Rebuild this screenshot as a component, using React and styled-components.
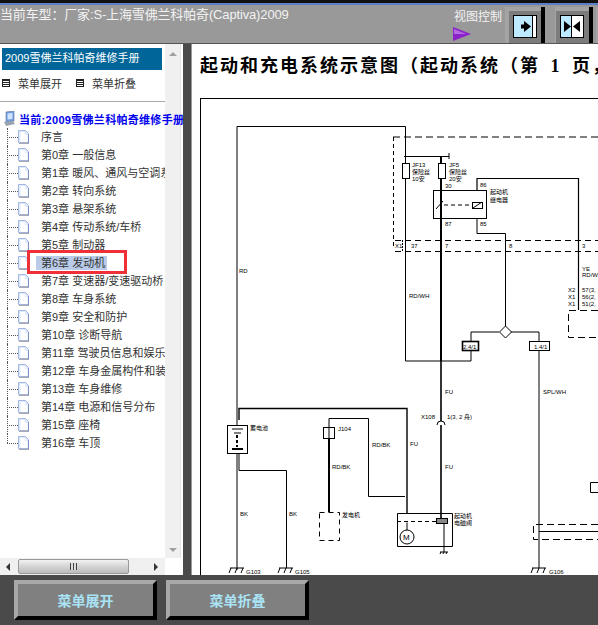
import React from 'react';
import styled, { createGlobalStyle } from 'styled-components';

const CJK = '"Liberation Sans", "Noto Sans CJK SC", sans-serif';

const Global = createGlobalStyle`
    html, body {
        margin: 0;
        padding: 0;
        background: #4a4a4a;
    }
    body {
        font-family: ${CJK};
        overflow: hidden;
    }
`;

const Page = styled.div`
    width: 598px;
    height: 625px;
    display: flex;
    flex-direction: column;
    overflow: hidden;
`;

const TopStrip = styled.div`
    height: 3px;
    background: #111;
    border-bottom: 2px solid #5b7fc4;
`;

const Header = styled.div`
    height: 38px;
    background: #999;
    border-bottom: 1px solid #555;
    display: flex;
    justify-content: space-between;
    overflow: hidden;
`;

const CarTitle = styled.div`
    font-size: 13px;
    line-height: 18px;
    letter-spacing: -0.15px;
    color: #f2f2f2;
    white-space: nowrap;
    margin-top: 1px;
`;

const Tools = styled.div`
    display: flex;
    width: 144px;
    flex: none;
    align-items: flex-start;
`;

const ViewControl = styled.div`
    width: 51px;
    flex: none;
    color: #f2f2f2;
    font-size: 12px;
    line-height: 16px;
    padding-top: 4px;
    white-space: nowrap;
    svg {
        display: block;
        margin: 2px 0 0 -1px;
    }
`;

const ToolButton = styled.div`
    width: ${p => p.$w}px;
    height: 37px;
    flex: none;
    margin-top: 2px;
    margin-right: ${p => p.$gap}px;
    box-sizing: border-box;
    background: #a4a4a4;
    border-right: 4px solid #000;
    padding: 4px 0 0 ${p => p.$pad}px;
`;

const ToolFace = styled.div`
    height: 100%;
    box-sizing: border-box;
    background: #7c7c7c;
    padding: 4px;
    svg {
        display: block;
    }
`;

const Main = styled.div`
    flex: 1;
    display: flex;
    min-height: 0;
`;

const LeftPanel = styled.div`
    width: 183px;
    flex: none;
    background: #fff;
    display: flex;
    flex-direction: column;
    overflow: hidden;
`;

const LeftBody = styled.div`
    flex: 1;
    display: flex;
    min-height: 0;
`;

const TreeColumn = styled.div`
    width: 165px;
    flex: none;
    padding-top: 4px;
`;

const BookTitle = styled.div`
    margin-left: 2px;
    width: 160px;
    height: 22px;
    line-height: 21px;
    background: #006699;
    color: #fff;
    font-size: 11px;
    padding-left: 3px;
    box-sizing: border-box;
`;

const MenuLinks = styled.div`
    display: flex;
    height: 26px;
    padding: 0 0 5px 2px;
    align-items: center;
    border-bottom: 1px solid #aaa;
`;

const MenuLink = styled.div`
    display: flex;
    align-items: center;
    gap: 8px;
    width: 74px;
    font-size: 11px;
    color: #333;
    white-space: nowrap;
`;

const MenuGlyph = styled.span`
    width: 6px;
    height: 6px;
    border: 1px solid #222;
    background: repeating-linear-gradient(#222 0 1px, #fff 1px 2px);
    flex: none;
`;

const Tree = styled.div`
    margin-top: 8px;
`;

const RootRow = styled.div`
    position: relative;
    z-index: 1;
    display: flex;
    align-items: center;
    gap: 3px;
    height: 18px;
    padding-left: 3px;
    width: 200px;
    font-size: 11px;
    font-weight: bold;
    letter-spacing: 0.3px;
    color: #0000ee;
    white-space: nowrap;
`;

const Items = styled.div`
    margin-left: 7px;
`;

const Row = styled.div`
    position: relative;
    display: flex;
    align-items: center;
    height: 18px;
`;

const Elbow = styled.div`
    position: relative;
    width: 11px;
    height: 18px;
    flex: none;
    &::before {
        content: '';
        position: absolute;
        left: 0;
        top: 0;
        height: ${p => (p.$last ? 9 : 18)}px;
        border-left: 1px dotted #555;
    }
    &::after {
        content: '';
        position: absolute;
        left: 0;
        top: 9px;
        width: 11px;
        border-top: 1px dotted #555;
    }
`;

const ItemLabel = styled.span`
    margin-left: 7px;
    padding: 0 2px 0 5px;
    font-size: 11px;
    line-height: 14px;
    color: #333;
    white-space: nowrap;
    background: ${p => (p.$selected ? '#b9cbe8' : 'transparent')};
    overflow: ${p => (p.$selected ? 'visible' : 'hidden')};
    max-width: 122px;
`;

const RedMark = styled.div`
    position: absolute;
    left: 20px;
    top: -4px;
    width: 100px;
    height: 24px;
    box-sizing: border-box;
    border: 3px solid #ef3038;
`;

const VScroll = styled.div`
    width: 16px;
    flex: none;
    background: #f0f0f0;
    border-right: 1px solid #e4e4e4;
    display: flex;
    flex-direction: column;
    justify-content: space-between;
    align-items: center;
    padding: 8px 0 6px;
    box-sizing: border-box;
`;

const UpArrow = styled.span`
    border: 4px solid transparent;
    border-top: 0;
    border-bottom: 4px solid #a0a0a0;
`;

const DownArrow = styled.span`
    border: 4px solid transparent;
    border-bottom: 0;
    border-top: 4px solid #a0a0a0;
`;

const HScroll = styled.div`
    height: 17px;
    background: #f0f0f0;
    display: flex;
    align-items: center;
    width: 165px;
    padding: 0 7px 0 6px;
    box-sizing: border-box;
`;

const SideArrow = styled.span`
    border: 4px solid transparent;
    ${p => (p.$left
        ? 'border-left: 0; border-right: 4px solid #333;'
        : 'border-right: 0; border-left: 4px solid #333; margin-left: auto;')}
`;

const Thumb = styled.div`
    width: 111px;
    height: 15px;
    margin-left: 8px;
    box-sizing: border-box;
    border: 1px solid #999;
    border-radius: 2px;
    background: linear-gradient(#f2f2f2, #d4d4d4 50%, #bdbdbd);
    display: flex;
    align-items: center;
    justify-content: center;
    &::after {
        content: '';
        width: 7px;
        height: 7px;
        background: repeating-linear-gradient(90deg, #444 0 1px, #ddd 1px 3px);
    }
`;

const Divider = styled.div`
    width: 8px;
    flex: none;
    background: #4a4a4a;
    border-right: 1px solid #999;
`;

const Content = styled.div`
    flex: 1;
    background: #fff;
    min-width: 0;
    overflow: hidden;
    display: flex;
    flex-direction: column;
`;

const DocTitle = styled.div`
    height: 54px;
    padding: 9px 0 0 8px;
    box-sizing: border-box;
    font-family: "Liberation Serif", "Noto Sans CJK SC", serif;
    font-size: 18px;
    line-height: 26px;
    letter-spacing: 2px;
    word-spacing: 4px;
    font-weight: bold;
    color: #000;
    white-space: nowrap;
`;

const Sheet = styled.div`
    flex: 1;
    margin-left: 8px;
    border-top: 1px solid #000;
    border-left: 1px solid #000;
    min-height: 0;
    svg {
        display: block;
    }
`;

const Footer = styled.div`
    height: 50px;
    background: #4a4a4a;
    display: flex;
    gap: 9px;
    padding: 5px 0 0 14px;
    box-sizing: border-box;
`;

const FooterButton = styled.div`
    width: 143px;
    height: 40px;
    box-sizing: border-box;
    background: #808080;
    border-style: solid;
    border-width: 4px;
    border-color: #a8a8a8 #000 #000 #a8a8a8;
    color: #a9e3f5;
    font-size: 14px;
    font-weight: bold;
    display: flex;
    align-items: center;
    justify-content: center;
`;

const chapters = [
    '序言', '第0章 一般信息', '第1章 暖风、通风与空调系统', '第2章 转向系统', '第3章 悬架系统',
    '第4章 传动系统/车桥', '第5章 制动器', '第6章 发动机', '第7章 变速器/变速驱动桥', '第8章 车身系统',
    '第9章 安全和防护', '第10章 诊断导航', '第11章 驾驶员信息和娱乐系统', '第12章 车身金属构件和装饰',
    '第13章 车身维修', '第14章 电源和信号分布', '第15章 座椅', '第16章 车顶'
];

const PageIcon = () => (
    <svg width="11" height="14" viewBox="0 0 11 14" style={{ flex: 'none' }}>
        <path d="M.5.5h7l3 3v9h-10z" fill="#dfeafc" stroke="#a4b4e0" />
        <path d="M2.500 2h4.500v3h2.500v7h-7z" fill="#fff" />
        <path d="M1 13.500h10" stroke="#a8a8a8" />
        <path d="M10.500 4v9" stroke="#7f8fc8" />
    </svg>
);

const RootIcon = () => (
    <svg width="13" height="16" viewBox="0 0 13 16" style={{ flex: 'none' }}>
        <path d="M3 1l8-1v10l-8 1z" fill="#6f9fe0" stroke="#5a6f9a" strokeWidth=".6" />
        <path d="M4.500 2.500l5-.5v6l-5 .6z" fill="#cfe4ff" />
        <path d="M1 11l9-1 2 3-9 2z" fill="#9aa3b0" />
    </svg>
);

const Ground = ({ x, y }) => (
    <g stroke="#000" strokeWidth="1" fill="none">
        <path d={`M${x - 7} ${y}H${x + 7}`} />
        <path d={`M${x - 6} ${y}l-2 5M${x} ${y}l-2 5M${x + 6} ${y}l-2 5`} />
    </g>
);

const Tiny = ({ x, y, children, size = 6 }) => (
    <text x={x} y={y} fontSize={size} fill="#000" fontFamily={CJK}>{children}</text>
);

const Diagram = () => (
    <svg width="397" height="476" viewBox="201 99 397 476">
        <g fill="none" stroke="#000" strokeWidth="1">
            {/* main feeds */}
            <path d="M237 570V126.500H405.500V361H471V332H499" />
            <path d="M511 332H539V341M539 351V568" />
            <path d="M477 190V178.500H578.500V310" strokeWidth="1.200" />
            <path d="M477 218V233.500H505.500V326" />
            <path d="M404 156.500H449M449 153V159" />
            <path d="M441 156V361" strokeWidth="2" />
            <path d="M441 361V421M441 425V521" strokeWidth="1.600" />
            <path d="M437 425a4 4 0 0 1 8 0" />
            <path d="M239 454V470.500H286.500V568" />
            <path d="M239 420V408.500H407V513" strokeWidth="1.400" />
            <path d="M329 512V418.500H368.500V496.500H405" />
            <path d="M329 438V512" strokeWidth="2" />
            <path d="M444 523V552" />

            {/* fuses and relay */}
            <rect x="402.500" y="163.500" width="7" height="15" fill="#fff" />
            <rect x="438.500" y="163.500" width="7" height="15" fill="#fff" />
            <rect x="433.500" y="190.500" width="53" height="28" />
            <rect x="472.500" y="202.500" width="10" height="6" />
            <path d="M473 208l9-6M436 209l7-8" />
            <path d="M444 205H472" strokeDasharray="4 3" />

            {/* dashed harness */}
            <path d="M393.500 137V248" strokeDasharray="4 3" />
            <path d="M393 137H598" strokeDasharray="7 4" />
            <path d="M395 240.500H598M395 251.500H598" strokeDasharray="6 4" />
            <path d="M402.500 240V252" strokeDasharray="2 1" />
            <path d="M598 310.500H568.500V337.500H598" strokeDasharray="7 4" />

            {/* splice boxes */}
            <path d="M505.500 326l6 6-6 6-6-6z" fill="#fff" />
            <rect x="462.500" y="341.500" width="16" height="9" fill="#fff" strokeWidth="1.600" />
            <rect x="529.500" y="341.500" width="20" height="9" fill="#fff" />

            {/* battery */}
            <rect x="227.500" y="425.500" width="20" height="28" fill="#fff" />
            <path d="M232 429H243M234 433H241" />
            <path d="M237 435V447" strokeWidth="2" strokeDasharray="3 2" />
            <path d="M232 449H243" strokeWidth="2" />

            {/* J104 and generator */}
            <rect x="323.500" y="427.500" width="11" height="11" />
            <path d="M319.500 512.500H339.500V540.500H319.500z" strokeDasharray="5 4" />

            {/* starter */}
            <path d="M407 513.500H397.500V546.500H452.500V513.500H407" />
            <circle cx="407" cy="537" r="7" fill="#fff" />
            <path d="M397 521.500H436" strokeDasharray="4 3" />
            <path d="M407 530V522.500" />
            <rect x="436.500" y="518.500" width="11" height="5" fill="#888" />

            {/* right side */}
            <path d="M598 524.500H533.500V539.500H598" strokeDasharray="7 4" />
            <path d="M539 531.500H598" />
            <path d="M598 482.500H590.500V492.500H598" />
        </g>

        <Ground x={237} y={568} />
        <Ground x={286} y={568} />
        <Ground x={539} y={568} />
        <path d="M440 552H448M441 552l-1 2M444 552l-1 2M447 552l-1 2" stroke="#000" fill="none" />

        <Tiny x={403} y={540} size={8}>M</Tiny>
        <Tiny x={412} y={167}>JF13</Tiny>
        <Tiny x={412} y={174}>保险丝</Tiny>
        <Tiny x={412} y={181}>10安</Tiny>
        <Tiny x={449} y={167}>JF5</Tiny>
        <Tiny x={449} y={174}>保险丝</Tiny>
        <Tiny x={449} y={181}>20安</Tiny>
        <Tiny x={445} y={188}>30</Tiny>
        <Tiny x={480} y={187}>86</Tiny>
        <Tiny x={490} y={194}>起动机</Tiny>
        <Tiny x={490} y={202}>继电器</Tiny>
        <Tiny x={445} y={226}>87</Tiny>
        <Tiny x={480} y={226}>85</Tiny>
        <Tiny x={395} y={248}>X1</Tiny>
        <Tiny x={411} y={248}>37</Tiny>
        <Tiny x={445} y={248}>7</Tiny>
        <Tiny x={509} y={248}>8</Tiny>
        <Tiny x={582} y={248}>3</Tiny>
        <Tiny x={582} y={271}>YE</Tiny>
        <Tiny x={582} y={277}>RD/WH</Tiny>
        <Tiny x={568} y={292}>X2</Tiny>
        <Tiny x={582} y={292}>57(3,</Tiny>
        <Tiny x={568} y={299}>X1</Tiny>
        <Tiny x={582} y={299}>56(2,</Tiny>
        <Tiny x={568} y={306}>X1</Tiny>
        <Tiny x={582} y={306}>51(2,</Tiny>
        <Tiny x={239} y={273}>RD</Tiny>
        <Tiny x={409} y={298}>RD/WH</Tiny>
        <Tiny x={463} y={349}>2.4/1</Tiny>
        <Tiny x={534} y={349}>1.4/1</Tiny>
        <Tiny x={445} y={394}>FU</Tiny>
        <Tiny x={543} y={394}>SPL/WH</Tiny>
        <Tiny x={421} y={419}>X108</Tiny>
        <Tiny x={447} y={419}>1(3, 2 舟)</Tiny>
        <Tiny x={250} y={430}>蓄电池</Tiny>
        <Tiny x={338} y={431}>J104</Tiny>
        <Tiny x={372} y={447}>RD/BK</Tiny>
        <Tiny x={332} y={469}>RD/BK</Tiny>
        <Tiny x={410} y={446}>FU</Tiny>
        <Tiny x={240} y={516}>BK</Tiny>
        <Tiny x={289} y={516}>BK</Tiny>
        <Tiny x={342} y={517}>发电机</Tiny>
        <Tiny x={445} y={469}>FU</Tiny>
        <Tiny x={454} y={518}>起动机</Tiny>
        <Tiny x={454} y={525}>电磁阀</Tiny>
        <Tiny x={246} y={574}>G103</Tiny>
        <Tiny x={295} y={574}>G105</Tiny>
        <Tiny x={549} y={574}>G106</Tiny>
    </svg>
);

const App = () => (
    <Page>
        <Global />
        <TopStrip />
        <Header>
            <CarTitle>当前车型：厂家:S-上海雪佛兰科帕奇(Captiva)2009</CarTitle>
            <Tools>
                <ViewControl>
                    视图控制
                    <svg width="19" height="14" viewBox="0 0 19 14">
                        <path d="M0 0l18 7L0 14z" fill="#8a22c8" />
                        <path d="M1 2l12 5-12 0z" fill="#b46ae0" />
                    </svg>
                </ViewControl>
                <ToolButton $w={40} $gap={10} $pad={4}>
                    <ToolFace>
                        <svg width="24" height="23" viewBox="0 0 24 23">
                            <rect x=".5" y=".5" width="23" height="22" fill="#bdeaff" stroke="#000" />
                            <rect x="20" y="1" width="3" height="21" fill="#fff" />
                            <path d="M19.500 1v21" stroke="#000" />
                            <path d="M11 6l7 5.500-7 5.500zM8 9.500h3v4H8z" fill="#000" />
                        </svg>
                    </ToolFace>
                </ToolButton>
                <ToolButton $w={38} $gap={3} $pad={1}>
                    <ToolFace>
                        <svg width="24" height="23" viewBox="0 0 24 23">
                            <rect x=".5" y=".5" width="23" height="22" fill="#bdeaff" stroke="#000" />
                            <rect x="12" y="1" width="11" height="21" fill="#fff" />
                            <path d="M11.500 1v21" stroke="#000" />
                            <path d="M4 6l7 5.500-7 5.500zM20 6l-7 5.500 7 5.500z" fill="#000" />
                        </svg>
                    </ToolFace>
                </ToolButton>
                <ToolButton $w={40} $gap={0} $pad={4} />
            </Tools>
        </Header>
        <Main>
            <LeftPanel>
                <LeftBody>
                    <TreeColumn>
                        <BookTitle>2009雪佛兰科帕奇维修手册</BookTitle>
                        <MenuLinks>
                            <MenuLink><MenuGlyph />菜单展开</MenuLink>
                            <MenuLink><MenuGlyph />菜单折叠</MenuLink>
                        </MenuLinks>
                        <Tree>
                            <RootRow><RootIcon />当前:2009雪佛兰科帕奇维修手册</RootRow>
                            <Items>
                                {chapters.map((name, i) => (
                                    <Row key={name}>
                                        <Elbow $last={i === chapters.length - 1} />
                                        <PageIcon />
                                        <ItemLabel $selected={name === '第6章 发动机'}>{name}</ItemLabel>
                                        {name === '第6章 发动机' && <RedMark />}
                                    </Row>
                                ))}
                            </Items>
                        </Tree>
                    </TreeColumn>
                    <VScroll>
                        <UpArrow />
                        <DownArrow />
                    </VScroll>
                </LeftBody>
                <HScroll>
                    <SideArrow $left />
                    <Thumb />
                    <SideArrow />
                </HScroll>
            </LeftPanel>
            <Divider />
            <Content>
                <DocTitle>起动和充电系统示意图（起动系统（第 1 页，共 2 页））</DocTitle>
                <Sheet><Diagram /></Sheet>
            </Content>
        </Main>
        <Footer>
            <FooterButton>菜单展开</FooterButton>
            <FooterButton>菜单折叠</FooterButton>
        </Footer>
    </Page>
);

export default App;
